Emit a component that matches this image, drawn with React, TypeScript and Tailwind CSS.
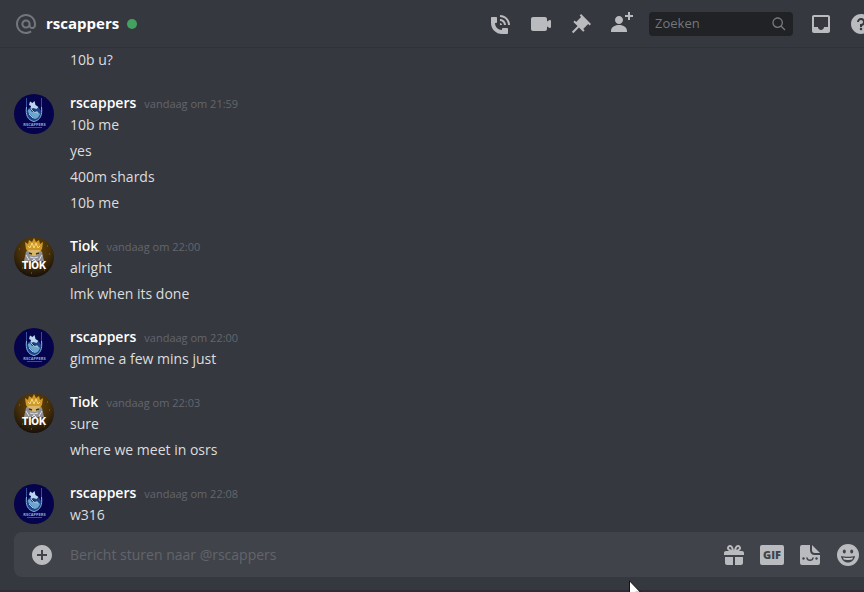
import React from "react";

type Author = "rscappers" | "Tiok";

type Group = {
  author: Author;
  time: string;
  lines: string[];
};

const groups: Group[] = [
  {
    author: "rscappers",
    time: "vandaag om 21:59",
    lines: ["10b me", "yes", "400m shards", "10b me"],
  },
  {
    author: "Tiok",
    time: "vandaag om 22:00",
    lines: ["alright", "lmk when its done"],
  },
  {
    author: "rscappers",
    time: "vandaag om 22:00",
    lines: ["gimme a few mins just"],
  },
  {
    author: "Tiok",
    time: "vandaag om 22:03",
    lines: ["sure", "where we meet in osrs"],
  },
  { author: "rscappers", time: "vandaag om 22:08", lines: ["w316"] },
];

const icons = {
  at: "M12 2C6.486 2 2 6.486 2 12C2 17.515 6.486 22 12 22C14.039 22 15.993 21.398 17.652 20.259L16.521 18.611C15.195 19.519 13.633 20 12 20C7.589 20 4 16.411 4 12C4 7.589 7.589 4 12 4C16.411 4 20 7.589 20 12V12.782C20 14.17 19.402 15 18.4 15L18.398 15.018C18.338 15.005 18.273 15 18.209 15H18C17.437 15 16.6 14.182 16.6 13.631V12C16.6 9.464 14.537 7.4 12 7.4C9.463 7.4 7.4 9.463 7.4 12C7.4 14.537 9.463 16.6 12 16.6C13.234 16.6 14.35 16.106 15.177 15.313C15.826 16.269 16.93 17 18 17L18.002 16.981C18.064 16.994 18.129 17 18.195 17H18.4C20.552 17 22 15.306 22 12.782V12C22 6.486 17.514 2 12 2ZM12 14.599C10.566 14.599 9.4 13.433 9.4 11.999C9.4 10.565 10.566 9.399 12 9.399C13.434 9.399 14.6 10.565 14.6 11.999C14.6 13.433 13.434 14.599 12 14.599Z",
  call: "M11 5V3C16.515 3 21 7.486 21 13H19C19 8.589 15.411 5 11 5ZM17 13H15C15 10.795 13.206 9 11 9V7C14.309 7 17 9.691 17 13ZM11 11V13H13C13 11.896 12.105 11 11 11ZM14 16H18C18.553 16 19 16.447 19 17V21C19 21.553 18.553 22 18 22H13C6.925 22 2 17.075 2 11V6C2 5.447 2.448 5 3 5H7C7.553 5 8 5.447 8 6V10C8 10.553 7.553 11 7 11H6C6.063 14.938 9 18 13 18V17C13 16.447 13.447 16 14 16Z",
  video:
    "M21.526 8.149C21.231 7.966 20.862 7.951 20.553 8.105L18 9.382V7C18 5.897 17.103 5 16 5H4C2.897 5 2 5.897 2 7V17C2 18.104 2.897 19 4 19H16C17.103 19 18 18.104 18 17V14.618L20.553 15.894C20.694 15.965 20.847 16 21 16C21.183 16 21.365 15.949 21.526 15.851C21.82 15.668 22 15.347 22 15V9C22 8.653 21.82 8.332 21.526 8.149Z",
  pin: "M22 12L12.101 2.101L10.686 3.514L12.101 4.929L7.151 9.878V9.88L5.736 8.465L4.322 9.88L8.565 14.122L2.908 19.778L4.322 21.192L9.979 15.536L14.222 19.778L15.636 18.364L14.222 16.95L19.171 12H19.172L20.586 13.414L22 12Z",
  addFriend:
    "M21 3H24V5H21V8H19V5H16V3H19V0H21V3ZM10 12C12.205 12 14 10.205 14 8C14 5.795 12.205 4 10 4C7.795 4 6 5.795 6 8C6 10.205 7.795 12 10 12ZM10 13C5.289 13 2 15.467 2 19V20H18V19C18 15.467 14.711 13 10 13Z",
  search:
    "M21.707 20.293L16.314 14.9C17.403 13.504 18 11.799 18 10C18 7.863 17.167 5.854 15.656 4.344C14.146 2.832 12.137 2 10 2C7.863 2 5.854 2.832 4.344 4.344C2.833 5.854 2 7.863 2 10C2 12.137 2.833 14.146 4.344 15.656C5.854 17.168 7.863 18 10 18C11.799 18 13.504 17.404 14.9 16.314L20.293 21.706L21.707 20.293ZM10 16C8.397 16 6.891 15.376 5.758 14.243C4.624 13.11 4 11.603 4 10C4 8.398 4.624 6.891 5.758 5.758C6.891 4.624 8.397 4 10 4C11.603 4 13.109 4.624 14.242 5.758C15.376 6.891 16 8.398 16 10C16 11.603 15.376 13.11 14.242 14.243C13.109 15.376 11.603 16 10 16Z",
  inbox:
    "M19 3H4.99C3.88 3 3.01 3.89 3.01 5L3 19C3 20.1 3.88 21 4.99 21H19C20.1 21 21 20.1 21 19V5C21 3.89 20.1 3 19 3ZM19 15H15C15 16.66 13.65 18 12 18C10.35 18 9 16.66 9 15H4.99V5H19V15Z",
  help: "M12 2C6.486 2 2 6.487 2 12C2 17.515 6.486 22 12 22C17.514 22 22 17.515 22 12C22 6.487 17.514 2 12 2ZM12 18.25C11.31 18.25 10.75 17.691 10.75 17C10.75 16.31 11.31 15.75 12 15.75C12.69 15.75 13.25 16.31 13.25 17C13.25 17.691 12.69 18.25 12 18.25ZM13 13.875V15H11V12H12C13.104 12 14 11.103 14 10C14 8.896 13.104 8 12 8C10.896 8 10 8.896 10 10H8C8 7.795 9.795 6 12 6C14.205 6 16 7.795 16 10C16 11.861 14.723 13.429 13 13.875Z",
  plus: "M12 2C6.486 2 2 6.487 2 12C2 17.515 6.486 22 12 22C17.514 22 22 17.515 22 12C22 6.487 17.514 2 12 2ZM17 13H13V17H11V13H7V11H11V7H13V11H17V13Z",
  gift: "M16.886 8H20C21.104 8 22 8.896 22 10V12H2V10C2 8.896 2.897 8 4 8H7.114C6.663 7.764 6.236 7.477 5.879 7.121C4.709 5.951 4.709 4.048 5.879 2.879C7.012 1.746 8.986 1.746 10.121 2.877C11.758 4.514 11.979 7.595 11.998 7.941L12 8L12.002 7.942C12.022 7.596 12.242 4.515 13.879 2.878C15.014 1.745 16.986 1.746 18.121 2.877C19.29 4.049 19.29 5.952 18.121 7.121C17.764 7.477 17.337 7.764 16.886 8ZM7.293 5.707C6.903 5.316 6.903 4.682 7.293 4.292C7.481 4.103 7.732 4 8 4C8.268 4 8.519 4.103 8.707 4.292C9.297 4.882 9.641 5.94 9.825 6.822C8.945 6.639 7.879 6.293 7.293 5.707ZM14.174 6.824C14.359 5.941 14.702 4.883 15.293 4.293C15.481 4.103 15.732 4 16 4C16.268 4 16.519 4.103 16.706 4.291C17.096 4.682 17.097 5.316 16.707 5.707C16.116 6.298 15.057 6.642 14.174 6.824ZM3 14V20C3 21.102 3.897 22 5 22H11V14H3ZM13 14V22H19C20.104 22 21 21.102 21 20V14H13Z",
};

const Icon = ({ d, className = "size-6" }: { d: string; className?: string }) => (
  <svg viewBox="0 0 24 24" className={className} aria-hidden="true">
    <path fill="currentColor" fillRule="evenodd" clipRule="evenodd" d={d} />
  </svg>
);

const IconButton = ({ label, d }: { label: string; d: string }) => (
  <button type="button" aria-label={label} className="shrink-0">
    <Icon d={d} />
  </button>
);

const KnightAvatar = () => (
  <svg viewBox="0 0 40 40" className="size-10" aria-hidden="true">
    <circle cx="20" cy="20" r="20" fill="#06034d" />
    <path d="M12.500 4v12M27.500 4v12" stroke="#35509a" strokeWidth="1" />
    <circle cx="20" cy="19.500" r="7.500" fill="#1d4285" />
    <path
      d="M16 7.500l2.500 1.500L20.500 7l1 4 3 2-2 2-3-1-3 1 .5-3-2-1z"
      fill="#b9d6ee"
    />
    <path
      d="M14 16c0 3 1 4 3 5l3 4c3 0 5-2 6-5l-3-3-5 1-2-3z"
      fill="#6da6cf"
    />
    <path d="M17 15l3 3 4 1M15 20l4 4" stroke="#d0e6f4" strokeWidth="0.800" />
    <path
      d="M12.500 13c-1 8 1 13 7.500 14.500 6.500-1.500 8.500-6.500 7.500-14.500"
      fill="none"
      stroke="#84b4dc"
      strokeWidth="1"
    />
    <text
      x="20.500"
      y="31.500"
      textAnchor="middle"
      fontSize="4"
      fontWeight="700"
      fill="#8fa9dd"
    >
      RSCAPPERS
    </text>
    <path d="M13 33.500h15" stroke="#5b6fae" strokeWidth="0.700" />
  </svg>
);

const KingAvatar = () => (
  <svg viewBox="0 0 40 40" className="size-10" aria-hidden="true">
    <defs>
      <radialGradient id="king-bg" cx="0.500" cy="0.300" r="0.700">
        <stop offset="0" stopColor="#6b4708" />
        <stop offset="0.600" stopColor="#432d09" />
        <stop offset="1" stopColor="#17100a" />
      </radialGradient>
    </defs>
    <circle cx="20" cy="20" r="20" fill="url(#king-bg)" />
    <path d="M10 24l2-9 3-4h10l3 4 2 9z" fill="#8f8f96" />
    <path
      d="M12 12l-1-7 3 2 1-4 3 2 2-4 2 4 3-2 1 4 3-2-1 7-2 3H14z"
      fill="#cf9a28"
    />
    <path d="M14 9l2 2 2-5 2 5 2-5 2 5 2-2" fill="none" stroke="#f6d984" />
    <path d="M14 13h12l-2 5-4 1-4-1z" fill="#d8b86d" />
    <path d="M15 16l3 1M25 16l-3 1" stroke="#34302e" strokeWidth="1.500" />
    <path
      d="M12 18l3 5M28 18l-3 5M16 20l4 1 4-1M18 24l2-2 2 2"
      fill="none"
      stroke="#e1e1e3"
    />
    <path
      d="M5 12h1M33 9h1M35 17h1M8 31h1M17 36h1M30 33h1"
      stroke="#96701e"
    />
    <text
      x="20"
      y="31.500"
      textAnchor="middle"
      fontSize="10"
      className="font-['Inter',sans-serif] font-extrabold"
      fill="#ffffff"
    >
      TIOK
    </text>
  </svg>
);

const StickerIcon = () => (
  <svg viewBox="0 0 24 24" className="size-6" fill="none" aria-hidden="true">
    <path
      d="M4 2h8v5.500a4.500 4.500 0 0 0 4.500 4.500H22v8a2 2 0 0 1-2 2H4a2 2 0 0 1-2-2V4a2 2 0 0 1 2-2z"
      fill="currentColor"
    />
    <path d="M14 2l8 8h-5a3 3 0 0 1-3-3z" fill="currentColor" />
    <path
      d="M9 15c.5 3 5.500 3 6 0"
      stroke="#40434a"
      strokeWidth="1.500"
      strokeLinecap="round"
    />
    <circle cx="5.500" cy="15.500" r="1.200" fill="#40434a" />
    <circle cx="18.500" cy="15.500" r="1.200" fill="#40434a" />
  </svg>
);

const EmojiIcon = () => (
  <svg viewBox="0 0 24 24" className="size-6" aria-hidden="true">
    <circle cx="12" cy="12" r="11" fill="currentColor" />
    <ellipse cx="8.300" cy="8.500" rx="1.500" ry="2" fill="#40434a" />
    <ellipse cx="15.700" cy="8.500" rx="1.500" ry="2" fill="#40434a" />
    <path d="M5 13c3 1 11 1 14 0-.5 4-3.500 6.500-7 6.500S5.500 17 5 13z" fill="#40434a" />
    <path d="M7 14.500c3 .7 7 .7 10 0l-.8 2c-2.500.5-6 .5-8.400 0z" fill="#c6c8cc" />
  </svg>
);

const Header = () => (
  <header className="flex h-12 shrink-0 items-center border-b border-[#303238] pl-[14px]">
    <Icon d={icons.at} className="size-6 shrink-0 text-[#72767d]" />
    <h1 className="ml-2 text-[15px] font-bold text-white">rscappers</h1>
    <span className="ml-2 size-[10px] shrink-0 rounded-full bg-[#43a25f]" />
    {/* the last button runs past the window edge */}
    <div className="-mr-[9px] ml-auto flex items-center gap-4 text-[#b9bbbe]">
      <IconButton label="Spraakoproep starten" d={icons.call} />
      <IconButton label="Videogesprek starten" d={icons.video} />
      <IconButton label="Vastgezette berichten" d={icons.pin} />
      <IconButton label="Vrienden toevoegen" d={icons.addFriend} />
      <label className="flex h-6 w-36 items-center rounded bg-[#202225] px-[6px] text-[#72767d]">
        <input
          type="text"
          aria-label="Zoeken"
          placeholder="Zoeken"
          className="min-w-0 flex-1 bg-transparent text-[13px] outline-none placeholder:text-[#72767d]"
        />
        <Icon d={icons.search} className="size-4 shrink-0" />
      </label>
      <IconButton label="Inbox" d={icons.inbox} />
      <IconButton label="Help" d={icons.help} />
    </div>
  </header>
);

const MessageGroup = ({ author, time, lines }: Group) => (
  <li className="mt-[17px] flex gap-4">
    <div className="shrink-0 pt-1">
      {author === "Tiok" ? <KingAvatar /> : <KnightAvatar />}
    </div>
    <div className="min-w-0 flex-1">
      <div className="flex h-6 items-baseline gap-2 pt-[2px]">
        <h2 className="text-[14px] font-semibold text-white">{author}</h2>
        <time className="text-[11px] text-[#63666d]">{time}</time>
      </div>
      {lines.map((line, i) => (
        <p key={i} className={i === 0 ? "pb-[2px]" : "py-[2px]"}>
          {line}
        </p>
      ))}
    </div>
  </li>
);

const Composer = () => (
  <footer className="shrink-0 border-b-2 border-[#2d2c34] pb-[13px] pl-[14px]">
    <form className="flex h-[45px] items-center rounded-l-lg bg-[#40434a] pr-1 pl-4 text-[#b9bbbe]">
      <IconButton label="Bestand uploaden" d={icons.plus} />
      <input
        type="text"
        aria-label="Bericht sturen naar @rscappers"
        placeholder="Bericht sturen naar @rscappers"
        className="ml-4 min-w-0 flex-1 bg-transparent text-[14px] outline-none placeholder:text-[#62656c]"
      />
      <div className="flex items-center gap-[14px]">
        <IconButton label="Geschenk" d={icons.gift} />
        <button
          type="button"
          className="h-5 w-6 rounded-[2px] bg-[#b9bbbe] text-center text-[11px] leading-5 font-extrabold text-[#40434a]"
        >
          GIF
        </button>
        <button type="button" aria-label="Stickers">
          <StickerIcon />
        </button>
        <button type="button" aria-label="Emoji">
          <EmojiIcon />
        </button>
      </div>
    </form>
  </footer>
);

const App = () => {
  return (
    <div className="relative flex h-screen flex-col overflow-hidden bg-[#36383f] font-['Open_Sans',sans-serif]">
      <Header />
      <main className="flex min-h-0 flex-1 flex-col justify-end overflow-hidden pb-1 pl-[14px]">
        <ol className="text-[14px] leading-[22px] text-[#dcddde]">
          <li className="pb-[2px] pl-14">10b u?</li>
          {groups.map((group, i) => (
            <MessageGroup key={i} {...group} />
          ))}
        </ol>
      </main>
      <Composer />
      {/* mouse pointer */}
      <svg
        viewBox="0 0 12 19"
        className="pointer-events-none absolute top-[580px] left-[629px] w-3"
        aria-hidden="true"
      >
        <path
          d="M.5.8v16l3.700-3.600 2.300 5.300 2.300-1-2.300-5.200h5z"
          fill="#fff"
          stroke="#111"
        />
      </svg>
    </div>
  );
};

export default App;
